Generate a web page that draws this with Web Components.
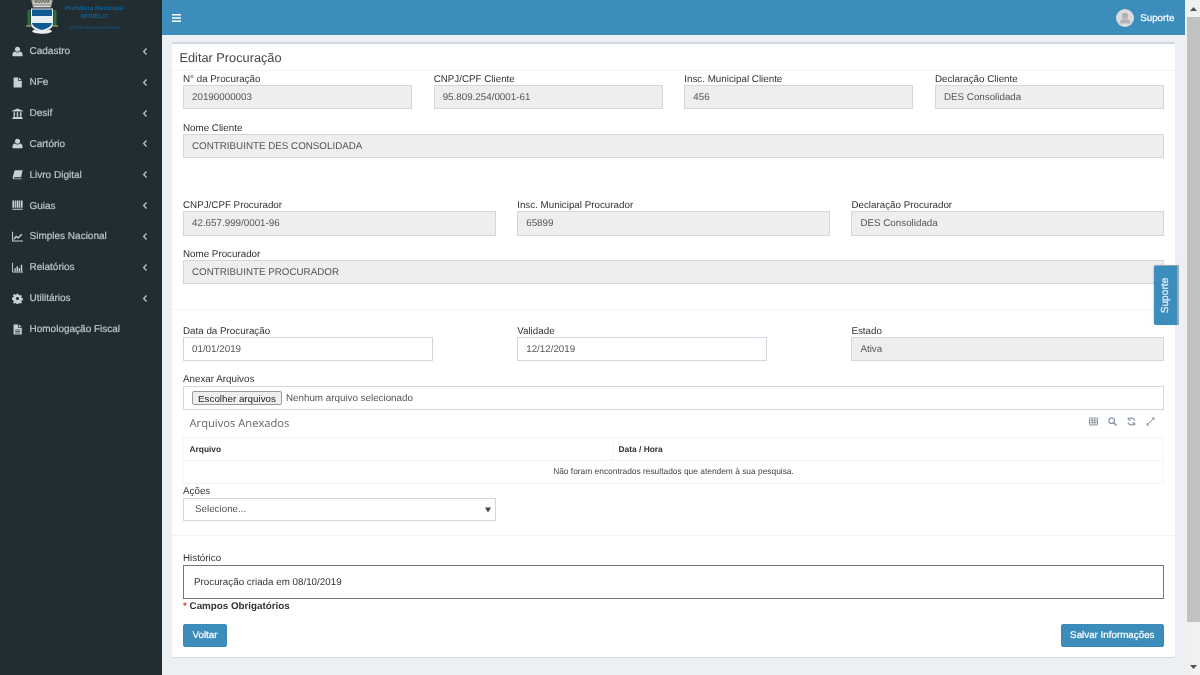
<!DOCTYPE html>
<html lang="pt-BR">
<head>
<meta charset="utf-8">
<title>Editar Procuração</title>
<style>
html, body { margin: 0; height: 100%; overflow: hidden; }
body { font-family: "Liberation Sans", Arial, sans-serif; font-size: 9.8px; color: #333; text-rendering: geometricPrecision; }
app-shell { filter: blur(.3px); }
</style>
</head>
<body>
<app-shell>
  <side-nav slot="side">
    <nav-item label="Cadastro" icon="user" arrow></nav-item>
    <nav-item label="NFe" icon="file" arrow></nav-item>
    <nav-item label="Desif" icon="bank" arrow></nav-item>
    <nav-item label="Cartório" icon="user" arrow></nav-item>
    <nav-item label="Livro Digital" icon="book" arrow></nav-item>
    <nav-item label="Guias" icon="barcode" arrow></nav-item>
    <nav-item label="Simples Nacional" icon="line" arrow></nav-item>
    <nav-item label="Relatórios" icon="bars" arrow></nav-item>
    <nav-item label="Utilitários" icon="cog" arrow></nav-item>
    <nav-item label="Homologação Fiscal" icon="filetext"></nav-item>
  </side-nav>
  <top-bar slot="top"></top-bar>

  <form-box title="Editar Procuração">
    <field-row cols="4">
      <form-field label="N° da Procuração">20190000003</form-field>
      <form-field label="CNPJ/CPF Cliente">95.809.254/0001-61</form-field>
      <form-field label="Insc. Municipal Cliente">456</form-field>
      <form-field label="Declaração Cliente">DES Consolidada</form-field>
    </field-row>
    <field-row cols="1" style="margin-top:11px">
      <form-field label="Nome Cliente">CONTRIBUINTE DES CONSOLIDADA</form-field>
    </field-row>

    <field-row cols="3" style="margin-top:39px">
      <form-field label="CNPJ/CPF Procurador" tall>42.657.999/0001-96</form-field>
      <form-field label="Insc. Municipal Procurador" tall>65899</form-field>
      <form-field label="Declaração Procurador" tall>DES Consolidada</form-field>
    </field-row>
    <field-row cols="1" style="margin-top:10px">
      <form-field label="Nome Procurador">CONTRIBUINTE PROCURADOR</form-field>
    </field-row>

    <box-rule style="margin-top:25px"></box-rule>

    <field-row cols="3" style="margin-top:13px">
      <form-field label="Data da Procuração" open short>01/01/2019</form-field>
      <form-field label="Validade" open short>12/12/2019</form-field>
      <form-field label="Estado">Ativa</form-field>
    </field-row>

    <file-field label="Anexar Arquivos" style="margin-top:11px"></file-field>
    <files-table></files-table>
    <select-field label="Ações"></select-field>

    <box-rule style="margin-top:14px"></box-rule>

    <history-field label="Histórico">Procuração criada em 08/10/2019</history-field>
    <required-note></required-note>

    <form-actions>
      <blue-button>Voltar</blue-button>
      <blue-button>Salvar Informações</blue-button>
    </form-actions>
  </form-box>

  <support-tab>Suporte</support-tab>
  <page-scroll slot="scroll"></page-scroll>
</app-shell>

<script>
// each element: template with its own style, cloned in the constructor
function make(name, html, setup) {
  const template = document.createElement('template')
  template.innerHTML = html
  class El extends HTMLElement {
    constructor() {
      super()
      this.attachShadow({ mode: 'open' }).appendChild(template.content.cloneNode(true))
    }
    connectedCallback() {
      if (setup) setup(this, this.shadowRoot)
    }
  }
  customElements.define(name, El)
}

const ICONS = {
  user: '<circle cx="7" cy="4" r="3.2"/><path d="M1.5 13c-.6 0-1-.4-1-1 0-2.8 1-5 3.2-5 .9.8 2 1.2 3.300 1.200s2.400-.4 3.300-1.200c2.200 0 3.200 2.200 3.200 5 0 .6-.4 1-1 1z"/>',
  file: '<path d="M2 .5h6v4.500h4.500v8.500H2z"/><path d="M9 .5l3.500 3.500H9z"/>',
  filetext: '<path d="M2 .5h6v4.500h4.500v8.500H2z"/><path d="M9 .5l3.500 3.500H9z"/><path d="M4 7.500h6.500M4 9.500h6.500M4 11.500h6.500" stroke="#222d32" stroke-width=".9"/>',
  bank: '<path d="M7 .5l6.800 3v1H.2v-1z"/><path d="M2 5.500h1.900V11H2zM6 5.500h1.900V11H6zM10.100 5.500H12V11h-1.900zM1 11.500h12V13H1zM.2 13.200h13.600v.8H.2z"/>',
  book: '<path d="M3.500 1.500H13.500l-2 9H3c-.8 0-.9 1.500 0 1.500h9.500l-.4 1.200H2.500C1 13.200.6 11.500 1 10z"/>',
  barcode: '<path d="M.5 .5h2.500v9.500H.5zM3.800 .5h1.200v9.500H3.800zM5.800 .5h2.500v9.500H5.800zM9 .5h1.200v9.500H9zM11 .5h2.500v9.500H11zM.5 11h13v1.500H.5z" />',
  line: '<path d="M.7 1v11.800H14" fill="none" stroke="currentColor" stroke-width="1.300"/><path d="M2.300 10.500l3-3.500 2.500 1.800L12.500 4" fill="none" stroke="currentColor" stroke-width="1.800"/>',
  bars: '<path d="M.7 1v11.800H14" fill="none" stroke="currentColor" stroke-width="1.200"/><path d="M3 8h1.800v4H3zM5.800 5.500h1.800v6.500H5.800zM8.500 7.500h1.800v4.500H8.500zM11.200 3.500H13V12h-1.800z"/>',
  cog: '<path fill-rule="evenodd" d="M5.800 1h2.400l.3 1.700 1.100.5 1.400-1 1.700 1.700-1 1.400.5 1.100 1.700.3v2.400l-1.700.3-.5 1.100 1 1.400-1.700 1.700-1.400-1-1.100.5-.3 1.700H5.800l-.3-1.700-1.100-.5-1.400 1-1.700-1.700 1-1.400-.5-1.100L0 8.200V5.800l1.700-.3.5-1.100-1-1.400 1.700-1.700 1.400 1 1.100-.5zM7 5a2 2 0 100 4 2 2 0 000-4z"/>'
}

make('app-shell', `
<style>
:host { display: flex; height: 100vh; background: #ecf0f5; position: relative; }
#main { flex: 1; min-width: 0; display: flex; flex-direction: column; }
#content { flex: 1; min-height: 0; padding: 7px 10px 0 10px; }
</style>
<slot name="side"></slot>
<div id="main">
  <slot name="top"></slot>
  <div id="content"><slot></slot></div>
</div>
<slot name="scroll"></slot>
`)

make('side-nav', `
<style>
:host { display: block; width: 162px; flex: none; background: #222d32; color: #b8c7ce; }
#brand { height: 35px; display: flex; overflow: hidden; padding-left: 26px; box-sizing: border-box; }
#crest { width: 32px; height: 36px; flex: none; }
#name { margin-left: 5px; width: 62px; text-align: center; color: #0d6297; font-weight: bold; font-size: 6.100px; line-height: 8px; padding-top: 5px; white-space: nowrap; }
#name small { display: block; font-size: 4px; font-weight: normal; line-height: 4px; margin-top: 5px; }
#items { display: flex; flex-direction: column; padding-top: 1.500px; }
</style>
<div id="brand">
  <svg id="crest" viewBox="0 0 32 36">
    <path d="M5 -1h22l-2 8.500H7z" fill="#a9a99f"/>
    <path d="M7 3h18M8 6.500h16" stroke="#ddd" stroke-width="1"/>
    <path d="M9 0l1 3 1.500-3 1.500 3 1.500-3 1.500 3 1.500-3 1.500 3 1.500-3 1.500 3 1-3" fill="none" stroke="#5c5c55" stroke-width=".7"/>
    <path d="M1.500 10h3v16h-3zM27.500 10h3v16h-3z" fill="#2f6d3a"/>
    <path d="M5 8.500h22v15c0 5-5 7-11 8.500-6-1.500-11-3.500-11-8.500z" fill="#e8eef2"/>
    <path d="M6 9.500h20V16H6zM6 23h20c-.5 3.500-4.500 5.500-10 7-5.500-1.500-9.500-3.500-10-7z" fill="#0f5a92"/>
    <path d="M6 31.500c3 3 17 3 20 0l-2-2c-3 1.800-13 1.800-16 0z" fill="#ededed"/>
    <path d="M0 26h6M26 26h6" stroke="#c9b97a" stroke-width="1"/>
  </svg>
  <div id="name">Prefeitura Municipal<br>MODELO<small>SECRETARIA DA FAZENDA</small></div>
</div>
<div id="items"><slot></slot></div>
`)

make('nav-item', `
<style>
:host { display: flex; align-items: center; height: 30.850px; padding-left: 12px; padding-right: 15px; font-size: 10px; -webkit-text-stroke: .2px #b8c7ce; color: #b8c7ce; }
svg#ic { width: 11px; height: 11px; flex: none; fill: #c3d1d8; color: #c3d1d8; margin-top: -1px; }
#t { margin-left: 6.500px; flex: 1; white-space: nowrap; }
#ch { width: 4px; height: 7px; fill: none; stroke: #b8c7ce; stroke-width: 1.300; flex: none; margin-top: -1px; }
</style>
<svg id="ic" viewBox="0 0 14 14"></svg><span id="t"></span>
<svg id="ch" viewBox="0 0 4 7"><path d="M3.500 .5L.7 3.500l2.800 3"/></svg>
`, (el, root) => {
  root.getElementById('t').textContent = el.getAttribute('label')
  root.getElementById('ic').innerHTML = ICONS[el.getAttribute('icon')]
  if (!el.hasAttribute('arrow')) root.getElementById('ch').style.visibility = 'hidden'
})

make('top-bar', `
<style>
:host { display: flex; align-items: center; height: 35px; flex: none; background: #3c8dbc; color: #fff; padding: 0 10.500px 0 10px; }
#burger { width: 9px; height: 8px; flex: none; fill: #fff; }
#space { flex: 1; }
#avatar { width: 18px; height: 18px; flex: none; }
#who { margin-left: 6.500px; padding-top: 1px; font-size: 9.800px; -webkit-text-stroke: .2px #fff; }
</style>
<svg id="burger" viewBox="0 0 9 8"><path d="M0 0h9v1.600H0zM0 3.200h9v1.600H0zM0 6.400h9V8H0z"/></svg>
<span id="space"></span>
<svg id="avatar" viewBox="0 0 18 18">
  <circle cx="9" cy="9" r="9" fill="#dcdcdc"/>
  <circle cx="9" cy="7" r="3.200" fill="#b4b4b4"/>
  <path d="M3.500 14.500c0-3 2-4.300 3.500-4.300h4c1.500 0 3.500 1.300 3.500 4.300z" fill="#b4b4b4"/>
</svg>
<span id="who">Suporte</span>
`)

make('form-box', `
<style>
:host { display: block; box-sizing: border-box; height: 615px; background: #fff; border-top: 2px solid #d2d6de; border-radius: 2px; box-shadow: 0 1px 1px rgba(0,0,0,.1); }
#head { height: 27px; box-sizing: border-box; border-bottom: 1px solid #f4f4f4; padding: 5.500px 0 0 7.500px; font-size: 12.750px; line-height: 16px; color: #444; }
#body { padding: 0 11px 0 11px; }
</style>
<div id="head"></div>
<div id="body"><slot></slot></div>
`, (el, root) => {
  root.getElementById('head').textContent = el.getAttribute('title')
  el.removeAttribute('title')
})

make('field-row', `
<style>
:host { display: grid; column-gap: 21.600px; }
</style>
<slot></slot>
`, (el) => {
  el.style.gridTemplateColumns = 'repeat(' + el.getAttribute('cols') + ', minmax(0, 1fr))'
})

make('form-field', `
<style>
:host { display: block; min-width: 0; }
label { display: block; height: 14px; line-height: 17px; font-size: 9.800px; color: #333; white-space: nowrap; }
#v { box-sizing: border-box; height: 24px; line-height: 24px; padding: 0 8px; background: #eee; border: 1px solid #d2d6de; color: #555; font-size: 9.800px; white-space: nowrap; overflow: hidden; }
:host([tall]) #v { height: 25px; line-height: 24px; }
:host([open]) #v { background: #fff; }
:host([short]) #v { width: 250px; }
</style>
<label></label>
<div id="v"><slot></slot></div>
`, (el, root) => {
  root.querySelector('label').textContent = el.getAttribute('label')
})

make('box-rule', `
<style>
:host { display: block; height: 1px; background: #f4f4f4; margin-left: -11px; margin-right: -11px; }
</style>
`)

make('file-field', `
<style>
:host { display: block; }
label { display: block; height: 14px; line-height: 16px; font-size: 9.800px; color: #333; }
#v { box-sizing: border-box; height: 24px; display: flex; align-items: center; padding-left: 8px; border: 1px solid #d2d6de; color: #555; font-size: 9.800px; }
button { box-sizing: border-box; width: 90px; height: 14px; padding: 0; margin-right: 4px; font: inherit; color: #222; background: #efefef; border: 1px solid #999; border-radius: 2px; }
</style>
<label></label>
<div id="v"><button type="button">Escolher arquivos</button><span>Nenhum arquivo selecionado</span></div>
`, (el, root) => {
  root.querySelector('label').textContent = el.getAttribute('label')
})

make('files-table', `
<style>
:host { display: block; }
#bar { height: 27px; display: flex; align-items: center; padding: 0 9px 0 6.500px; }
h4 { flex: 1; margin: 0; font: normal 11.200px "Open Sans", sans-serif; color: #666; }
#tools { display: flex; gap: 10px; align-items: center; margin-bottom: 4px; }
#tools svg { width: 9px; height: 9px; fill: none; stroke: #8a96a3; stroke-width: 1.300; }
table { width: 100%; border-collapse: collapse; table-layout: fixed; font-size: 8.400px; }
th, td { height: 22px; padding: 0 5.500px; border: 1px solid #f4f4f4; color: #333; }
th { text-align: left; font-weight: bold; }
td { text-align: center; color: #444; line-height: 20px; vertical-align: top; }
</style>
<div id="bar">
  <h4>Arquivos Anexados</h4>
  <div id="tools">
    <svg viewBox="0 0 9 9"><path d="M.5 1h8v7h-8zM.5 3.300h8M.5 5.600h8M3.200 1v7M5.800 1v7" stroke-width=".9"/></svg>
    <svg viewBox="0 0 9 9"><circle cx="3.700" cy="3.700" r="2.800"/><path d="M5.800 5.800L8.500 8.500" stroke-width="1.600"/></svg>
    <svg viewBox="0 0 9 9"><path d="M8 3.500A3.700 3.700 0 001.500 2.500M1 5.500A3.700 3.700 0 007.500 6.500"/><path d="M1.200 .6v2.500h2.500M7.800 8.400V5.900H5.300" stroke-width="1"/></svg>
    <svg viewBox="0 0 9 9"><path d="M2 7l5-5" stroke-width="1"/><path d="M5.500.5h3v3zM.5 5.500v3h3z" fill="#8a96a3" stroke="none"/></svg>
  </div>
</div>
<table>
  <colgroup><col style="width:429px"><col></colgroup>
  <tr><th>Arquivo</th><th>Data / Hora</th></tr>
  <tr><td colspan="2">Não foram encontrados resultados que atendem à sua pesquisa.</td></tr>
</table>
`)

make('select-field', `
<style>
:host { display: block; width: 313px; }
label { display: block; height: 14px; line-height: 16px; font-size: 9.800px; color: #333; }
#v { box-sizing: border-box; height: 23px; display: flex; align-items: center; justify-content: space-between; padding: 0 4px 0 11px; border: 1px solid #d2d6de; color: #555; font-size: 9.800px; }
svg { width: 6px; height: 6px; fill: #444; }
</style>
<label></label>
<div id="v"><span>Selecione...</span><svg viewBox="0 0 6 6"><path d="M0 .5h6L3 5.500z"/></svg></div>
`, (el, root) => {
  root.querySelector('label').textContent = el.getAttribute('label')
})

make('history-field', `
<style>
:host { display: block; margin-top: 14px; }
label { display: block; height: 15px; line-height: 17px; font-size: 9.800px; color: #333; }
#v { box-sizing: border-box; height: 34px; line-height: 33px; padding-left: 10px; border: 1px solid #767676; color: #333; font-size: 9.800px; }
</style>
<label></label>
<div id="v"><slot></slot></div>
`, (el, root) => {
  root.querySelector('label').textContent = el.getAttribute('label')
})

make('required-note', `
<style>
:host { display: block; height: 14px; line-height: 16px; font-size: 9.800px; font-weight: bold; color: #333; }
i { color: #d9534f; font-style: normal; font-weight: bold; }
</style>
<i>*</i> Campos Obrigatórios
`)

make('form-actions', `
<style>
:host { display: flex; justify-content: space-between; margin-top: 11px; }
</style>
<slot></slot>
`)

make('blue-button', `
<style>
:host { display: block; box-sizing: border-box; height: 23px; line-height: 21px; padding: 0 8.500px; background: #3c8dbc; border: 1px solid #3a89b6; border-radius: 2px; color: #fff; font-size: 9.800px; -webkit-text-stroke: .2px #fff; white-space: nowrap; }
blue-button { min-width: 43px; }
</style>
<slot></slot>
`)

make('support-tab', `
<style>
:host { position: absolute; left: 1154px; top: 265px; width: 25px; height: 60px; box-sizing: border-box; display: flex; align-items: center; justify-content: center; background: #3c8dbc; border-top: 1px solid #9aa5ad; border-right: 2px solid #9aa5ad; border-radius: 2px 0 0 2px; box-shadow: -1px 0 2px rgba(0,0,0,.12); color: #e8f1f7; font-size: 10.200px; -webkit-text-stroke: .2px #e8f1f7; }
span { display: block; transform: rotate(-90deg); white-space: nowrap; }
</style>
<span><slot></slot></span>
`)

make('page-scroll', `
<style>
:host { display: flex; flex-direction: column; align-items: stretch; width: 15px; flex: none; background: #f1f1f1; box-sizing: border-box; padding-left: 2px; }
.arrow { height: 17px; display: flex; align-items: center; justify-content: center; flex: none; }
.arrow svg { width: 7px; height: 4px; fill: #505050; }
#thumb { height: 605px; background: #c1c1c1; flex: none; }
#rest { flex: 1; }
</style>
<div class="arrow"><svg viewBox="0 0 7 4"><path d="M3.500 0L7 4H0z"/></svg></div>
<div id="thumb"></div>
<div id="rest"></div>
<div class="arrow"><svg viewBox="0 0 7 4"><path d="M0 0h7L3.500 4z"/></svg></div>
`)
</script>
</body>
</html>
